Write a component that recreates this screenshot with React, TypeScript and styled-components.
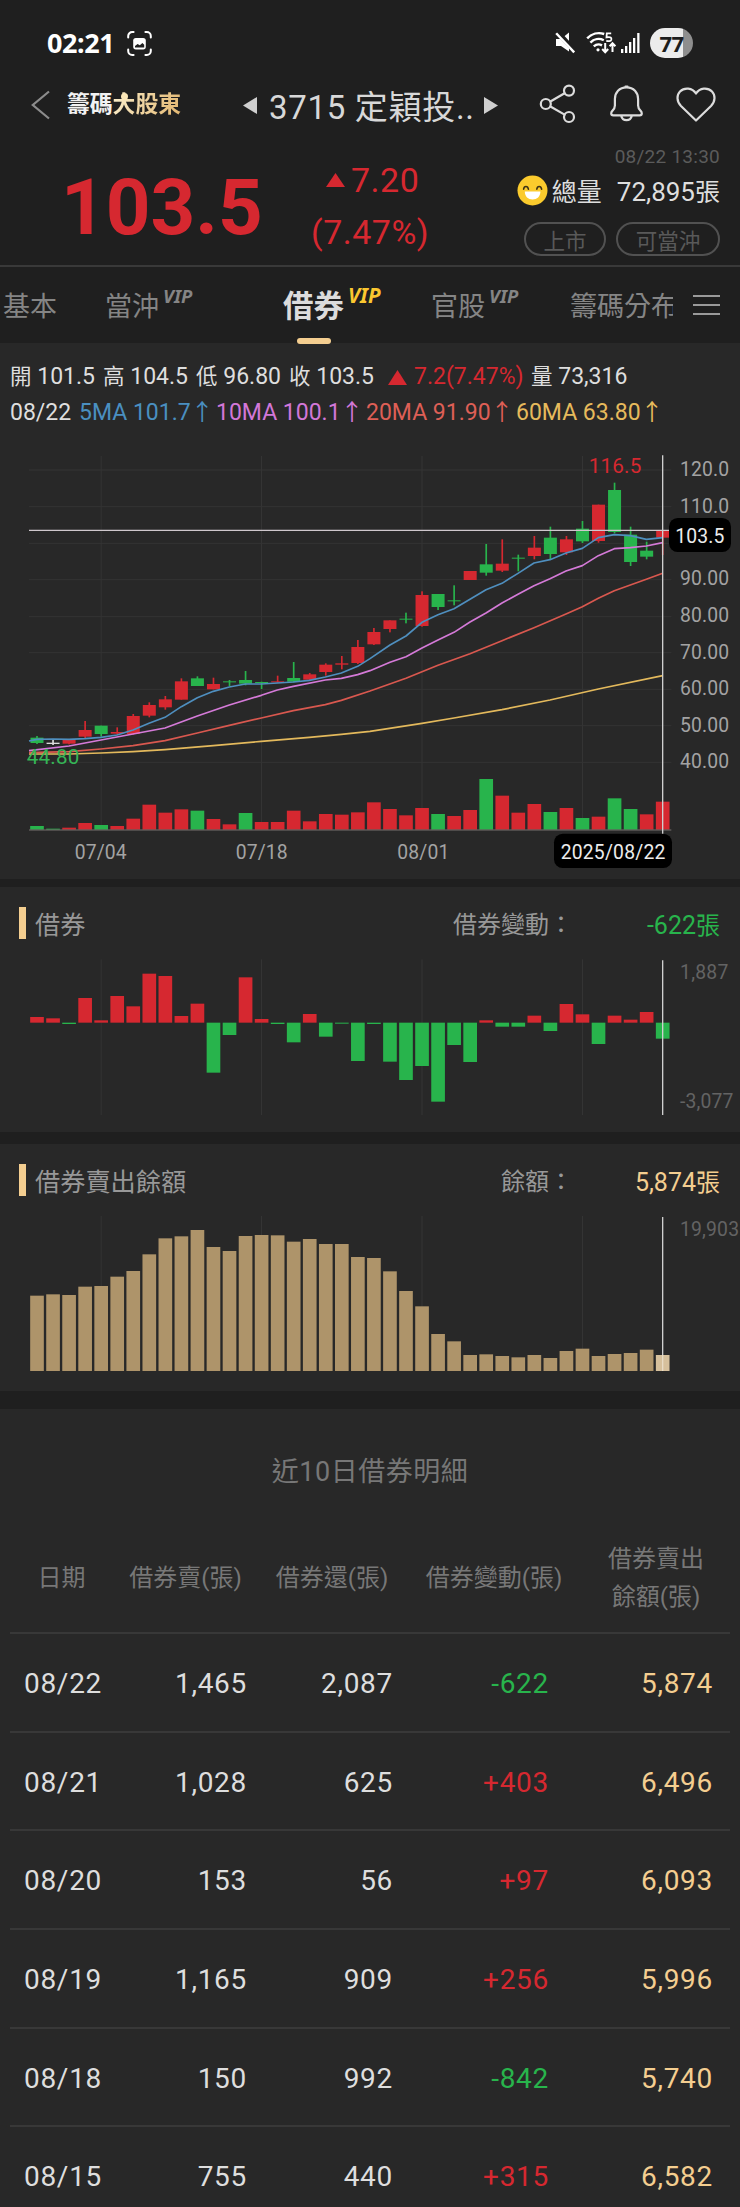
import React from "react";
import styled, { createGlobalStyle, css } from "styled-components";

const RED = "#d62830";
const GREEN = "#28b44c";
const GOLD = "#f4ce90";

const GlobalStyle = createGlobalStyle`
  * { box-sizing: border-box; }
  body {
    margin: 0;
    background: #1f1f1f;
    color: #dedede;
    font-family: Roboto, "Noto Sans CJK TC", sans-serif;
    overflow: hidden;
  }
  svg { display: block; flex: none; }
`;

const Screen = styled.main`
  width: 740px;
  height: 2207px;
  overflow: hidden;
  display: flex;
  flex-direction: column;
  > * { flex: none; }
`;

/* ---------- status bar ---------- */

const StatusBar = styled.div`
  height: 70px;
  padding: 16px 47px 0 47px;
  display: flex;
  align-items: center;
`;

const Clock = styled.span`
  font: 700 27px/54px "Noto Sans", sans-serif;
  letter-spacing: -0.4px;
  color: #fff;
  margin-right: 13px;
`;

const StatusIcons = styled.div`
  margin-left: auto;
  display: flex;
  align-items: center;
  > svg:nth-of-type(1) { margin-right: 10px; }
  > svg:nth-of-type(2) { margin-right: 4px; }
`;

const Battery = styled.span`
  width: 43px;
  height: 30px;
  margin-left: 9px;
  border-radius: 15px;
  background: linear-gradient(90deg, #ececec 77%, #8e8e8e 77%);
  color: #1d1d1d;
  font: 700 22px/30px "Noto Sans", sans-serif;
  letter-spacing: -0.5px;
  text-align: center;
`;

/* ---------- navigation ---------- */

const NavBar = styled.header`
  height: 70px;
  padding-left: 31px;
  display: flex;
  align-items: center;
`;

const Brand = styled.div`
  width: 115px;
  margin-left: 17px;
  position: relative;
  font-size: 22.8px;
  line-height: 34px;
  font-weight: 700;
  color: #f2f2f2;
  white-space: nowrap;
`;

const BrandGold = styled.span`
  color: transparent;
  background: linear-gradient(110deg, #fbeecb, #e2b66f);
  background-clip: text;
`;

const BrandDot = styled.i`
  position: absolute;
  left: 53.5px;
  top: 5px;
  width: 7px;
  height: 7px;
  border-radius: 50%;
  background: #fbe7b8;
`;

const StockPicker = styled.div`
  margin-left: 61px;
  display: flex;
  align-items: center;
`;

const StockName = styled.h1`
  width: 215px;
  margin: 5px 0 0 12px;
  font-size: 33px;
  font-weight: 400;
  line-height: 46px;
  letter-spacing: 0.7px;
  white-space: nowrap;
  color: #d8d8d8;
`;

const NavActions = styled.div`
  margin: -2px 0 0 41px;
  display: flex;
  align-items: center;
`;

/* ---------- quote ---------- */

const Quote = styled.section`
  height: 127px;
  display: grid;
  grid-template-columns: 284px 171px 265px;
  border-bottom: 2px solid #393939;
`;

const Price = styled.strong`
  padding: 23px 0 0 61px;
  font-size: 78px;
  line-height: 90px;
  font-weight: 700;
  color: ${RED};
`;

const Change = styled.div`
  padding: 14px 0 0 27px;
  color: ${RED};
  font-size: 34px;
  line-height: 52px;
  letter-spacing: 0.5px;
`;

const ChangeLine = styled.div`
  display: flex;
  align-items: center;
  padding-left: 15px;
  gap: 6px;
`;

const Details = styled.div`
  display: flex;
  flex-direction: column;
  align-items: flex-end;
  padding-top: 4px;
`;

const Time = styled.time`
  font-size: 19px;
  line-height: 26px;
  letter-spacing: 0.25px;
  color: #5b5b5b;
`;

const Volume = styled.div`
  margin-top: 4px;
  display: flex;
  align-items: center;
  font-size: 26px;
  line-height: 36px;
  > span:first-of-type { margin: 0 15px 0 4px; font-size: 25px; }
  > svg { margin-top: -5px; }
  small { font-size: 25px; }
`;

const Pills = styled.div`
  margin-top: 11px;
  display: flex;
  gap: 10px;
`;

const Pill = styled.span<{ $w: number }>`
  width: ${(p) => p.$w}px;
  height: 34px;
  border: 2px solid #515151;
  border-radius: 17px;
  color: #595959;
  font-size: 21.5px;
  line-height: 35px;
  text-align: center;
`;

/* ---------- tabs ---------- */

const Tabs = styled.nav`
  height: 76px;
  display: flex;
  align-items: flex-start;
  padding: 0 20px 0 3px;
`;

const TabStrip = styled.div`
  width: 670px;
  height: 78px;
  display: grid;
  grid-template-columns: 102px 178px 148px 139px 103px;
  overflow: hidden;
`;

const Tab = styled.div<{ $active?: boolean }>`
  position: relative;
  display: flex;
  align-items: flex-start;
  padding-top: 20px;
  white-space: nowrap;
  font-size: 27px;
  line-height: 40px;
  color: #858585;
  ${(p) =>
    p.$active &&
    css`
      font-size: 30.5px;
      font-weight: 700;
      color: #dcdcdc;
      &::after {
        content: "";
        position: absolute;
        left: 14px;
        top: 71px;
        width: 34px;
        height: 6px;
        border-radius: 3px;
        background: ${GOLD};
      }
    `}
`;

const Vip = styled.sup<{ $active?: boolean }>`
  font: italic 700 ${(p) => (p.$active ? 20.5 : 18.5)}px/26px "Noto Sans", sans-serif;
  margin: ${(p) => (p.$active ? -5 : -4)}px 0 0 4px;
  color: ${(p) => (p.$active ? "#fbc730" : "#858585")};
`;

const MenuButton = styled.div`
  margin: 28px 0 0 20px;
  width: 27px;
  height: 20px;
  display: flex;
  flex-direction: column;
  justify-content: space-between;
  > i { height: 2px; background: #9a9a9a; }
`;

/* ---------- panels ---------- */

const Panel = styled.section<{ $h: number; $gap: number }>`
  height: ${(p) => p.$h}px;
  margin-bottom: ${(p) => p.$gap}px;
  background: #282828;
`;

const PriceInfo = styled.div`
  padding: 16px 0 9px;
`;

const InfoLine = styled.div<{ $cols: string }>`
  display: grid;
  grid-template-columns: ${(p) => p.$cols};
  padding-left: 10px;
  font-size: 23px;
  line-height: 36px;
  white-space: pre;
  small { font-size: 21.5px; }
`;

const Tone = styled.span<{ $c: string }>`
  color: ${(p) => p.$c};
`;

const Rise = styled.span`
  display: flex;
  align-items: center;
  gap: 7px;
  color: ${RED};
`;

const PanelHead = styled.div`
  height: 56px;
  padding: 20px 20px 0 19px;
  display: flex;
  align-items: flex-start;
  font-size: 24px;
  line-height: 37px;
  color: #989898;
`;

const Marker = styled.i`
  width: 7px;
  height: 32px;
  margin-right: 9px;
  background: ${GOLD};
`;

const PanelTitle = styled.h2`
  margin: 0;
  font-size: 25.2px;
  font-weight: 400;
  line-height: 37px;
`;

const PanelLabel = styled.span<{ $x: number }>`
  margin-left: auto;
  width: ${(p) => p.$x}px;
`;

const PanelValue = styled.span<{ $c: string }>`
  width: 130px;
  text-align: right;
  font-size: 25px;
  color: ${(p) => p.$c};
  small { font-size: 24px; }
`;

/* ---------- table ---------- */

const TableTitle = styled.h2`
  margin: 0;
  padding-top: 43px;
  font-size: 27px;
  font-weight: 400;
  line-height: 40px;
  letter-spacing: 0.5px;
  text-align: center;
  color: #777;
`;

const columns = css`
  display: grid;
  grid-template-columns: 103px 145px 148px 176px 148px;
  align-items: center;
  margin: 0 10px;
`;

const TableHead = styled.div`
  ${columns}
  height: 140px;
  padding-top: 33px;
  font-size: 24px;
  line-height: 37.6px;
  text-align: center;
  color: #777;
`;

const TableRow = styled.div`
  ${columns}
  height: 98.7px;
  padding-top: 3px;
  border-top: 2px solid #383838;
  font-size: 28px;
  line-height: 40px;
  letter-spacing: 0.7px;
`;

const Cell = styled.span<{ $r?: number; $c?: string }>`
  text-align: ${(p) => (p.$r ? "right" : "left")};
  padding: ${(p) => (p.$r ? `0 ${p.$r}px 0 0` : "0 0 0 14px")};
  color: ${(p) => p.$c ?? "#dedede"};
`;

/* ---------- chart data, in thirds of a pixel ---------- */

const STEP = 48.13;
const FIRST = 111;
const xAt = (i: number) => FIRST + i * STEP;
const GRID_X = [303.5, 784.5, 1266, 1747.5];
const CURSOR_X = 1988;

type Candle = [string, number, number, number, number, number];

// tone, high, body top, body bottom, low, volume top
const candles: Candle[] = [
  ["g", 888, 893, 909, 912, 1158], ["w", 898, 908, 912, 915, 1166], ["r", 898, 900, 911, 913, 1163],
  ["r", 843, 870, 890, 896, 1149], ["g", 857, 857, 882, 890, 1155], ["r", 862, 876, 881, 884, 1158],
  ["r", 822, 828, 882, 884, 1136], ["r", 787, 795, 827, 832, 1094], ["r", 768, 778, 802, 809, 1118],
  ["r", 715, 724, 779, 779, 1108], ["g", 709, 715, 738, 738, 1112], ["r", 713, 732, 748, 748, 1137],
  ["g", 720, 724, 727, 738, 1153], ["g", 693, 720, 731, 736, 1119], ["g", 725, 726, 729, 747, 1146],
  ["r", 707, 724, 727, 727, 1146], ["g", 666, 714, 725, 727, 1112], ["r", 699, 703, 719, 720, 1144],
  ["r", 670, 674, 696, 707, 1122], ["r", 648, 670, 674, 688, 1124], ["r", 600, 621, 669, 672, 1117],
  ["r", 564, 576, 613, 615, 1087], ["r", 541, 541, 567, 577, 1107], ["g", 518, 536, 539, 550, 1126],
  ["r", 454, 465, 558, 560, 1104], ["g", 462, 462, 501, 510, 1122], ["g", 436, 481, 484, 496, 1128],
  ["r", 393, 393, 420, 420, 1110], ["g", 312, 373, 398, 407, 1017], ["r", 298, 371, 392, 396, 1067],
  ["g", 344, 353, 356, 394, 1118], ["r", 288, 323, 348, 358, 1092], ["g", 260, 293, 342, 358, 1116],
  ["r", 288, 298, 337, 345, 1104], ["g", 243, 266, 304, 309, 1134], ["r", 194, 194, 303, 308, 1130],
  ["g", 128, 150, 276, 280, 1075], ["g", 260, 284, 366, 378, 1107], ["g", 305, 332, 350, 358, 1123],
  ["r", 270, 272, 293, 345, 1085],
];

// volume bars whose tone differs from that of their candle
const volumeTone: Record<number, string> = { 1: "g", 12: "r", 14: "r", 16: "r", 23: "r", 26: "r", 30: "r", 38: "r" };

const toneColor: Record<string, string> = { r: RED, g: GREEN, w: "#dcdcdc" };

const ma5 = "87,903 111,898 159,897 207,898 255,896 303,892 351,885 399,870 447,850 495,832 544,800 592,773 640,754 688,741 736,732 784,732 832,729 880,726 928,721 976,711 1024,699 1073,679 1110,656 1170,615 1218,588 1266,547 1314,524 1362,506 1410,478 1458,449 1506,430 1554,400 1602,369 1650,359 1698,339 1747,325 1795,293 1843,284 1891,287 1939,298 1988,293";
const ma10 = "87,932 207,918 303,900 399,882 495,864 592,828 688,795 784,766 832,750 880,739 976,720 1024,715 1073,704 1110,692 1170,667 1218,650 1266,624 1314,600 1362,577 1410,546 1458,519 1506,489 1554,463 1602,437 1650,416 1698,393 1747,377 1795,347 1843,326 1891,323 1939,318 1988,308";
const ma20 = "87,938 207,935 303,927 399,917 495,902 592,879 688,856 784,834 880,812 976,794 1024,781 1110,753 1218,715 1314,676 1410,641 1506,602 1602,563 1698,522 1747,500 1795,475 1843,452 1939,418 1988,400";
const ma60 = "87,942 207,942 303,939 399,935 495,929 640,917 784,904 928,892 1024,883 1110,874 1266,850 1362,834 1506,809 1650,780 1795,747 1988,707";

const lendingChange = [
  411, 415, 432, 354, 421, 348, 379, 281, 288, 408, 371, 578, 465, 292, 417, 432, 487, 402, 470, 431,
  543, 432, 545, 600, 558, 665, 495, 546, 421, 440, 440, 407, 453, 372, 403, 492, 407, 419, 396, 476,
];

const balance = [
  467, 463, 465, 440, 438, 410, 393, 343, 295, 289, 270, 321, 333, 288, 285, 286, 305, 297, 312, 312,
  351, 354, 394, 453, 499, 582, 604, 645, 643, 648, 652, 645, 654, 633, 626, 648, 642, 639, 629, 645,
];

const axis: [string, number][] = [
  ["120.0", 107], ["110.0", 218], ["90.00", 435], ["80.00", 546], ["70.00", 656],
  ["60.00", 765], ["50.00", 876], ["40.00", 985],
];

const ChartText = styled.text<{ $c: string; $s?: number }>`
  font-family: Roboto, sans-serif;
  font-size: ${(p) => p.$s ?? 58}px;
  fill: ${(p) => p.$c};
`;

const VerticalGrid = ({ from, to }: { from: number; to: number }) => (
  <g stroke="#343434" strokeWidth="3">
    {GRID_X.map((x) => (
      <line key={x} x1={x} x2={x} y1={from} y2={to} />
    ))}
  </g>
);

const PriceChart = () => (
  <svg width="740" height="439" viewBox="0 0 2220 1317">
    <VerticalGrid from={48} to={1168} />
    <g stroke="#343434" strokeWidth="3">
      {[90, 200, 310, 419, 530, 638, 748, 857, 967].map((y) => (
        <line key={y} x1="87" x2="2014" y1={y} y2={y} />
      ))}
    </g>
    {candles.map(([t, hi, top, bottom, lo, vol], i) => (
      <g key={i}>
        <rect x={xAt(i) - 2.5} y={hi} width="5" height={lo - hi} fill={toneColor[t]} />
        <rect x={xAt(i) - 19.5} y={top} width="39" height={bottom - top} fill={toneColor[t]} />
        <rect x={xAt(i) - 20.5} y={vol} width="41" height={1169 - vol} fill={toneColor[volumeTone[i] ?? t]} />
      </g>
    ))}
    <line x1="87" x2="2014" y1="1170" y2="1170" stroke="#77706e" strokeWidth="3" />
    <g fill="none" strokeWidth="5" strokeLinejoin="round">
      <polyline points={ma60} stroke="#e3b95c" />
      <polyline points={ma20} stroke="#d9584f" />
      <polyline points={ma10} stroke="#d57ad8" />
      <polyline points={ma5} stroke="#4f8fbf" />
    </g>
    <line x1="87" x2="2010" y1="271" y2="271" stroke="#cfc8cd" strokeWidth="4" />
    <line x1={CURSOR_X} x2={CURSOR_X} y1="46" y2="1182" stroke="#cfcfcf" strokeWidth="4" />
    <ChartText $c={RED} $s={62} x="1766" y="100" textLength="158">116.5</ChartText>
    <ChartText $c="#35b556" $s={62} x="80" y="973" textLength="158">44.80</ChartText>
    {axis.map(([label, y]) => (
      <ChartText key={label} $c="#a3a3a3" x="2040" y={y} textLength="147">{label}</ChartText>
    ))}
    {[["07/04", 224], ["07/18", 707], ["08/01", 1192]].map(([label, x]) => (
      <ChartText key={label} $c="#a3a3a3" x={x} y="1258" textLength="156">{label}</ChartText>
    ))}
    <rect x="2007" y="234" width="186" height="102" rx="26" fill="#000" />
    <ChartText $c="#ececec" x="2026" y="308" textLength="147">103.5</ChartText>
    <rect x="1662" y="1181" width="354" height="103" rx="26" fill="#000" />
    <ChartText $c="#ececec" x="1682" y="1257" textLength="314">2025/08/22</ChartText>
  </svg>
);

const ChangeChart = () => (
  <svg width="740" height="176" viewBox="0 189 2220 528">
    <VerticalGrid from={238} to={705} />
    {lendingChange.map((y, i) => (
      <rect
        key={i}
        x={xAt(i) - 20.5}
        width="41"
        y={Math.min(y, 428)}
        height={Math.abs(y - 428)}
        fill={y > 428 ? GREEN : RED}
      />
    ))}
    <line x1={CURSOR_X} x2={CURSOR_X} y1="241" y2="705" stroke="#cfcfcf" strokeWidth="4" />
    <ChartText $c="#636363" x="2040" y="298" textLength="145">1,887</ChartText>
    <ChartText $c="#636363" x="2040" y="683" textLength="160">-3,077</ChartText>
  </svg>
);

const BalanceChart = () => (
  <svg width="740" height="176" viewBox="0 180 2220 528">
    <VerticalGrid from={228} to={693} />
    {balance.map((y, i) => (
      <rect
        key={i}
        x={xAt(i) - 20.5}
        width="41"
        y={y}
        height={693 - y}
        fill={i === balance.length - 1 ? "#d6c09c" : "#ae946a"}
      />
    ))}
    <line x1={CURSOR_X} x2={CURSOR_X} y1="231" y2="645" stroke="#cfcfcf" strokeWidth="4" />
    <line x1={CURSOR_X} x2={CURSOR_X} y1="645" y2="693" stroke="#e9dcc6" strokeWidth="4" />
    <ChartText $c="#636363" x="2040" y="289" textLength="177">19,903</ChartText>
  </svg>
);

/* ---------- icons ---------- */

const CaptureIcon = () => (
  <svg width="25" height="25" viewBox="0 0 25 25" fill="none" stroke="#fff" strokeWidth="2" strokeLinecap="round">
    <path d="M1.2 6.5V5a4 4 0 0 1 4-4h1.4M18.4 1h1.4a4 4 0 0 1 4 4v1.5M23.8 18.5V20a4 4 0 0 1-4 4h-1.4M6.6 24H5.2a4 4 0 0 1-4-4v-1.5" />
    <rect x="6.2" y="7" width="12.6" height="11.4" rx="2.6" fill="#fff" stroke="none" />
    <path d="M8 16.5v-1.6l2.6-2 2.2 1.3 2.6-2.2 1.8 1.7v2.8z" fill="#1f1f1f" stroke="none" />
  </svg>
);

const MuteIcon = () => (
  <svg width="21" height="22" viewBox="0 0 21 22">
    <path d="M1 7h5l8-6.5v19L6 14H1z" fill="#fff" />
    <path d="M2-.5 20 19" stroke="#1f1f1f" strokeWidth="5" />
    <path d="M1.2 1.2 19.2 20.4" stroke="#fff" strokeWidth="2.4" />
  </svg>
);

const WifiIcon = () => (
  <svg width="31" height="24" viewBox="0 0 31 24" fill="none" stroke="#fff" strokeWidth="2.4">
    <path d="M1.2 7.4a16 16 0 0 1 17-4.4M4.4 11.6a11.4 11.4 0 0 1 13.4-2.4M7.8 15.4a7 7 0 0 1 8.2-1" />
    <circle cx="12" cy="18.8" r="1.6" fill="#fff" stroke="none" />
    <path d="M25.2 2.3h-4.4l-.3 4.1c4.4-1 5.2.6 4.8 2.3-.5 1.7-3 1.9-5 .9" strokeWidth="1.8" />
    <path d="M19.2 12v8.6M16.2 18l3 3.2 3-3.2M26.5 21v-8.6M23.6 15.2l2.9-3 2.9 3" strokeWidth="2" />
  </svg>
);

const SignalIcon = () => (
  <svg width="20" height="22" viewBox="0 0 20 22" fill="#fff">
    <rect x="0" y="17" width="2.3" height="4" />
    <rect x="4" y="14" width="2.3" height="7" />
    <rect x="8" y="10" width="2.3" height="11" />
    <rect x="12" y="6" width="2.3" height="15" />
    <rect x="16.2" y="1" width="2.3" height="20" />
  </svg>
);

const BackIcon = () => (
  <svg width="19" height="30" viewBox="0 0 19 30" fill="none" stroke="#8c8c8c" strokeWidth="2.2">
    <path d="M18 1.5 1.8 15 18 28.5" />
  </svg>
);

const Triangle = ({ d, w, h, color }: { d: string; w: number; h: number; color: string }) => (
  <svg width={w} height={h} viewBox={`0 0 ${w} ${h}`}>
    <path d={d} fill={color} />
  </svg>
);

const ActionIcons = () => (
  <svg width="178" height="40" viewBox="0 0 178 40" fill="none" stroke="#dcdcdc" strokeWidth="2.2" strokeLinecap="round" strokeLinejoin="round">
    <circle cx="6.8" cy="20" r="5" />
    <circle cx="30" cy="6.6" r="5" />
    <circle cx="30" cy="33" r="5" />
    <path d="M11.4 17.5 25.6 9.2M11.4 22.5 25.6 30.6" />
    <path d="M87.5 3.4c-7.2 0-11.6 5-11.6 11.6v6.4c0 2.4-.8 3.6-2.4 5.2-1.5 1.4-2.2 4.8.8 4.8h26.4c3 0 2.3-3.4.8-4.8-1.6-1.6-2.4-2.8-2.4-5.2V15c0-6.6-4.4-11.6-11.6-11.6zM82.2 31.8c.6 2.8 2.6 4.4 5.3 4.4s4.7-1.6 5.3-4.4M86.5 2.6h2" />
    <path d="m157 36.5-15-14.5c-4.6-4.8-4.4-11-1-14.500 4.300-4.400 12.300-4 16 2 3.700-6 11.700-6.400 16-2 3.400 3.500 3.600 9.700-1 14.500z" />
  </svg>
);

const SmileIcon = () => (
  <svg width="31" height="31" viewBox="0 0 31 31">
    <circle cx="15.5" cy="15.5" r="15" fill="#fbcb2d" />
    <path d="M6.6 14.2c.5-3.6 4.2-3.6 4.8 0M19.8 14.2c.5-3.6 4.2-3.6 4.8 0" fill="none" stroke="#3d3215" strokeWidth="1.6" strokeLinecap="round" />
    <path d="M7.8 16.4h15.6c0 5-3.4 8-7.8 8s-7.8-3-7.8-8z" fill="#fff" />
  </svg>
);

const rows = [
  ["08/22", "1,465", "2,087", "-622", "5,874"],
  ["08/21", "1,028", "625", "+403", "6,496"],
  ["08/20", "153", "56", "+97", "6,093"],
  ["08/19", "1,165", "909", "+256", "5,996"],
  ["08/18", "150", "992", "-842", "5,740"],
  ["08/15", "755", "440", "+315", "6,582"],
];

export default function App() {
  return (
    <Screen>
      <GlobalStyle />
      <StatusBar>
        <Clock>02:21</Clock>
        <CaptureIcon />
        <StatusIcons>
          <MuteIcon />
          <WifiIcon />
          <SignalIcon />
          <Battery>77</Battery>
        </StatusIcons>
      </StatusBar>

      <NavBar>
        <BackIcon />
        <Brand>
          籌碼<BrandGold>大股東</BrandGold>
          <BrandDot />
        </Brand>
        <StockPicker>
          <Triangle w={14} h={17} d="M14 0v17L0 8.5z" color="#cfcfcf" />
          <StockName>3715 定穎投..</StockName>
          <Triangle w={14} h={17} d="M0 0v17L14 8.5z" color="#cfcfcf" />
        </StockPicker>
        <NavActions>
          <ActionIcons />
        </NavActions>
      </NavBar>

      <Quote>
        <Price>103.5</Price>
        <Change>
          <ChangeLine>
            <Triangle w={19} h={14} d="M9.5 0 19 14H0z" color={RED} />
            <span>7.20</span>
          </ChangeLine>
          <div>(7.47%)</div>
        </Change>
        <Details>
          <Time>08/22 13:30</Time>
          <Volume>
            <SmileIcon />
            <span>總量</span>
            <span>72,895<small>張</small></span>
          </Volume>
          <Pills>
            <Pill $w={82}>上市</Pill>
            <Pill $w={104}>可當沖</Pill>
          </Pills>
        </Details>
      </Quote>

      <Tabs>
        <TabStrip>
          <Tab>基本</Tab>
          <Tab>當沖<Vip>VIP</Vip></Tab>
          <Tab $active>借券<Vip $active>VIP</Vip></Tab>
          <Tab>官股<Vip>VIP</Vip></Tab>
          <Tab>籌碼分布</Tab>
        </TabStrip>
        <MenuButton><i /><i /><i /></MenuButton>
      </Tabs>

      <Panel $h={536} $gap={8}>
        <PriceInfo>
          <InfoLine $cols="93px 93px 93px 99px 143px auto">
            <span><small>開</small> 101.5</span>
            <span><small>高</small> 104.5</span>
            <span><small>低</small> 96.80</span>
            <span><small>收</small> 103.5</span>
            <Rise>
              <Triangle w={19} h={15} d="M9.5 0 19 15H0z" color={RED} />
              7.2(7.47%)
            </Rise>
            <span><small>量</small> 73,316</span>
          </InfoLine>
          <InfoLine $cols="69px 137px 150px 150px auto">
            <span>08/22</span>
            <Tone $c="#4a8fc0">5MA 101.7↑</Tone>
            <Tone $c="#d277d8">10MA 100.1↑</Tone>
            <Tone $c="#de5f56">20MA 91.90↑</Tone>
            <Tone $c="#e6ba5c">60MA 63.80↑</Tone>
          </InfoLine>
        </PriceInfo>
        <PriceChart />
      </Panel>

      <Panel $h={245} $gap={12}>
        <PanelHead>
          <Marker />
          <PanelTitle>借券</PanelTitle>
          <PanelLabel $x={137}>借券變動：</PanelLabel>
          <PanelValue $c={GREEN}>-622<small>張</small></PanelValue>
        </PanelHead>
        <ChangeChart />
      </Panel>

      <Panel $h={247} $gap={18}>
        <PanelHead>
          <Marker />
          <PanelTitle>借券賣出餘額</PanelTitle>
          <PanelLabel $x={89}>餘額：</PanelLabel>
          <PanelValue $c={GOLD}>5,874<small>張</small></PanelValue>
        </PanelHead>
        <BalanceChart />
      </Panel>

      <Panel $h={798} $gap={0}>
        <TableTitle>近10日借券明細</TableTitle>
        <TableHead>
          <span>日期</span>
          <span>借券賣(張)</span>
          <span>借券還(張)</span>
          <span>借券變動(張)</span>
          <span>借券賣出<br />餘額(張)</span>
        </TableHead>
        {rows.map(([date, sold, returned, change, left]) => (
          <TableRow key={date}>
            <Cell>{date}</Cell>
            <Cell $r={11}>{sold}</Cell>
            <Cell $r={13}>{returned}</Cell>
            <Cell $r={33} $c={change.startsWith("-") ? GREEN : RED}>{change}</Cell>
            <Cell $r={17} $c={GOLD}>{left}</Cell>
          </TableRow>
        ))}
      </Panel>
    </Screen>
  );
}
